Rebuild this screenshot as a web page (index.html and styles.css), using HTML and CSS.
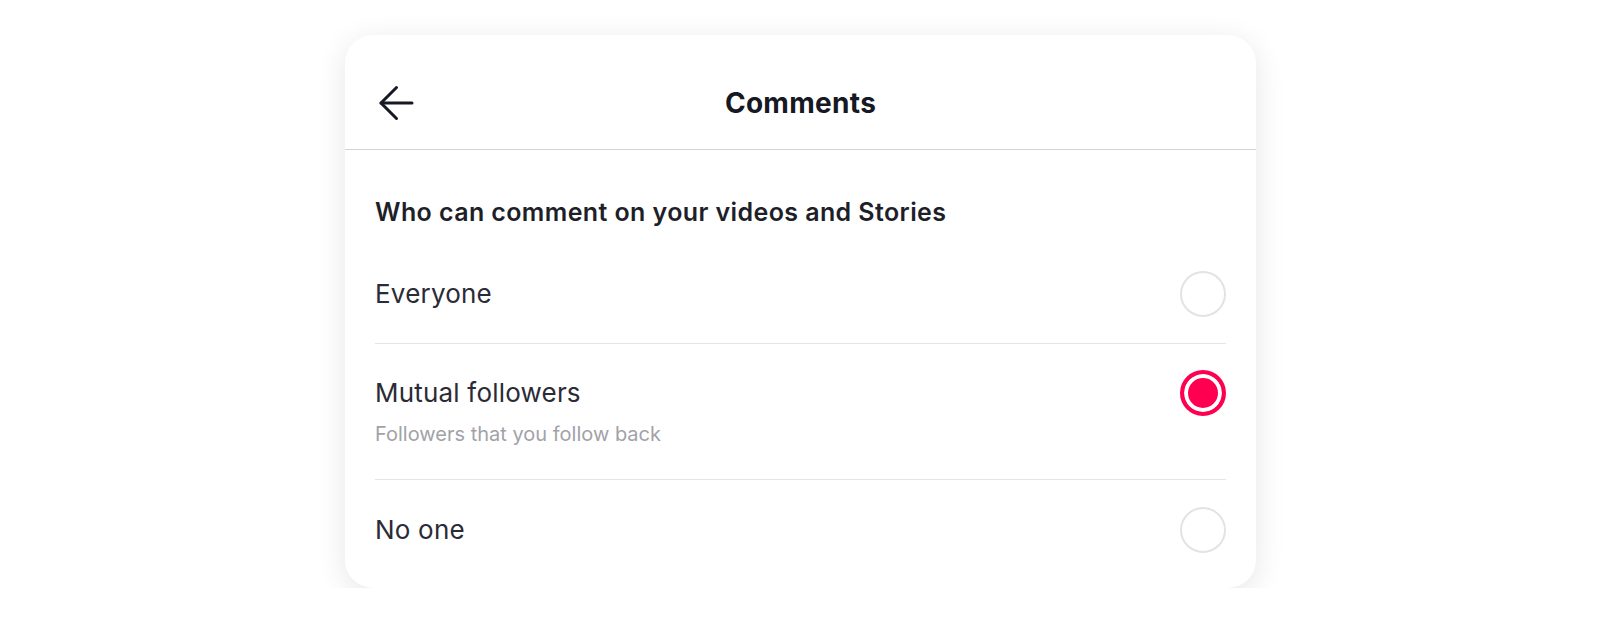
FILE: index.html
```html
<!DOCTYPE html>
<html lang="en">
<head>
<meta charset="utf-8">
<title>Comments</title>
<link rel="stylesheet" href="styles.css">
</head>
<body>
<div class="card">
  <header class="header">
    <button class="back" aria-label="Back">
      <svg width="36" height="36" viewBox="0 0 36 36" fill="none" stroke="#161823" stroke-width="3" stroke-linecap="round" stroke-linejoin="round">
        <path d="M3 18H34"/>
        <path d="M18.5 2.5L3 18L18.5 33.5"/>
      </svg>
    </button>
    <h1 class="title">Comments</h1>
    <span class="spacer"></span>
  </header>
  <section class="section">
    <h2 class="heading">Who can comment on your videos and Stories</h2>
    <div class="option">
      <div class="option-text"><div class="option-title">Everyone</div></div>
      <span class="radio"></span>
    </div>
    <div class="option option-sub">
      <div class="option-text">
        <div class="option-title">Mutual followers</div>
        <div class="option-desc">Followers that you follow back</div>
      </div>
      <span class="radio radio-on"></span>
    </div>
    <div class="option option-last">
      <div class="option-text"><div class="option-title">No one</div></div>
      <span class="radio"></span>
    </div>
  </section>
</div>
</body>
</html>
```
FILE: styles.css
```css
* { box-sizing: border-box; }
html, body { margin: 0; padding: 0; background: #ffffff; }
body {
  font-family: "Inter", "Lato", "Liberation Sans", sans-serif;
  color: #161823;
  padding: 35px 0 0 345px;
}
.card {
  width: 911px;
  height: 553px;
  background: #fff;
  border-radius: 28px;
  box-shadow: 0 6px 30px rgba(0, 0, 0, 0.1);
  overflow: hidden;
}
.header {
  height: 115px;
  padding: 22px 0 0 0;
  border-bottom: 1px solid #d3d3d6;
  display: grid;
  grid-template-columns: 1fr auto 1fr;
  align-items: center;
}
.back {
  justify-self: start;
  margin-left: 33px;
  width: 36px;
  height: 36px;
  padding: 0;
  border: 0;
  background: none;
  display: flex;
}
.title {
  margin: 0;
  font-size: 28px;
  font-weight: 700;
  line-height: 32px;
  letter-spacing: 0.3px;
}
.section { padding: 46px 30px 0 30px; }
.heading {
  margin: 0 0 17px 0;
  font-size: 25px;
  font-weight: 600;
  line-height: 32px;
  letter-spacing: 0.4px;
  color: #1e1f29;
}
.option {
  display: flex;
  align-items: flex-start;
  justify-content: space-between;
  padding: 26px 0;
  border-bottom: 1px solid #e6e6e8;
}
.option-sub { padding-bottom: 26px; }
.option-last { border-bottom: 0; padding-top: 27px; }
.option-title {
  font-size: 26px;
  font-weight: 400;
  line-height: 46px;
  letter-spacing: 0.2px;
  color: #2a2b36;
}
.option-desc {
  margin-top: 6px;
  margin-bottom: 7px;
  font-size: 20px;
  line-height: 24px;
  color: #a2a2a8;
}
.radio {
  flex: none;
  width: 46px;
  height: 46px;
  border-radius: 50%;
  border: 2px solid #e3e3e5;
}
.radio-on {
  border: 4px solid #ff0050;
  background: #ff0050;
  box-shadow: inset 0 0 0 4px #fff;
}
```
